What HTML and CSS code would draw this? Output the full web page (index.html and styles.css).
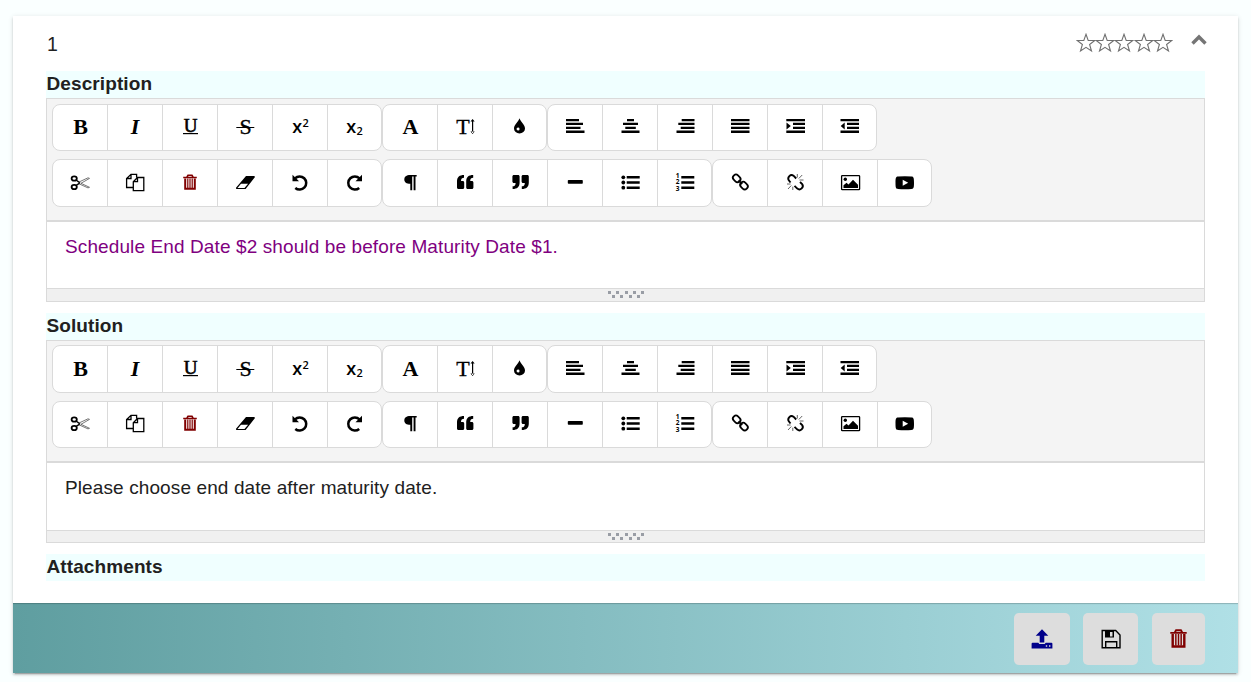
FILE: index.html
```html
<!DOCTYPE html>
<html lang="en">
<head>
<meta charset="utf-8">
<title>Message 1</title>
<link rel="stylesheet" href="styles.css">
</head>
<body>
<svg class="sprite" aria-hidden="true">
  <symbol id="bold" viewBox="0 0 24 24"><text class="serif heavy" x="12.500" y="19">B</text></symbol>
  <symbol id="italic" viewBox="0 0 24 24"><text class="serif heavy slant" x="12" y="19">I</text></symbol>
  <symbol id="underline" viewBox="0 0 24 24"><text class="serif mid" x="12.500" y="16.500">U</text><path d="M5 18h15v1.200H5z"/></symbol>
  <symbol id="strike" viewBox="0 0 24 24"><text class="serif firm" x="12.500" y="19">S</text><path d="M3.300 12h18v1h-18z"/></symbol>
  <symbol id="sup" viewBox="0 0 24 24"><text class="sans" x="9.300" y="18">x</text><text class="sans tiny" x="17.700" y="12">2</text></symbol>
  <symbol id="sub" viewBox="0 0 24 24"><text class="sans" x="8.300" y="18">x</text><text class="sans tiny" x="16.700" y="20">2</text></symbol>
  <symbol id="font" viewBox="0 0 24 24"><text class="serif heavy" x="12.500" y="19">A</text></symbol>
  <symbol id="size" viewBox="0 0 24 24"><text class="serif firm" x="10" y="19">T</text><path d="M19 5h1.200v13H19zM17.500 6.500l2.100-2.500 2.100 2.500zM17.500 16.500l2.100 2.500 2.100-2.500z"/></symbol>
  <symbol id="drop" viewBox="0 0 24 24"><path fill-rule="evenodd" d="M11.500 3.300C12.500 7 17 9.500 17 13.500a5.500 5 0 0 1-11 0C6 9.500 10.500 7 11.500 3.300zM10 12.500a1.500 1.500 0 1 0 .1 3 1.500 1.500 0 0 0-.1-3z"/></symbol>
  <symbol id="left" viewBox="0 0 24 24"><path d="M3 3.900h13v2.300H3zM3 7.700h17V10H3zM3 11.700h14.500V14H3zM3 15.500h18.500V18H3z"/></symbol>
  <symbol id="center" viewBox="0 0 24 24"><path d="M9 3.900h7v2.300H9zM5 7.700h15V10H5zM7.300 11.700h10.500V14H7.300zM3.500 15.500h18V18h-18z"/></symbol>
  <symbol id="right" viewBox="0 0 24 24"><path d="M8.700 3.900h12.800v2.300H8.700zM5.300 7.700h16.200V10H5.300zM7.700 11.700h13.800V14H7.700zM3.500 15.500h18V18h-18z"/></symbol>
  <symbol id="justify" viewBox="0 0 24 24"><path d="M3 3.900h18.500v2.300H3zM3 7.700h18.500V10H3zM3 11.700h18.500V14H3zM3 15.500h18.500V18H3z"/></symbol>
  <symbol id="indent" viewBox="0 0 24 24"><path d="M3.300 3.900H22v2.300H3.300zM10 7.700h12V10H10zM10 11.700h12V14H10zM3.300 15.500H22V18H3.300zM3.500 7.500L7.800 11l-4.300 3.500z"/></symbol>
  <symbol id="outdent" viewBox="0 0 24 24"><path d="M2.500 3.900H21v2.300H2.500zM9 7.700h12V10H9zM9 11.700h12V14H9zM2.500 15.500H21V18H2.500zM6.700 7.500L2.700 11l4 3.500z"/></symbol>
  <symbol id="cut" viewBox="0 0 24 24"><g fill="none" stroke="#000"><ellipse cx="6.200" cy="7.500" rx="2.600" ry="2.200" stroke-width="1.800"/><ellipse cx="6.200" cy="16" rx="2.600" ry="2.200" stroke-width="1.800"/><path stroke-width="1.500" d="M8 9l4 2.800M8 14.500l4-2.700"/><path stroke="#555" stroke-width=".8" d="M11 11l9-4.200 1.500.6L13 12.300l8.500 4-1.500.6-9-4.100"/></g></symbol>
  <symbol id="copy" viewBox="0 0 24 24"><path fill="none" stroke="#000" stroke-width="1.300" d="M10 16.500H3.600V7.500L8 3.300h5.600v3.200M3.600 7.500H8V3.300M10.300 19.700V10.700l4.200-4.200h6.300v13.200zM10.300 10.700h4.200V6.500"/></symbol>
  <symbol id="trash" viewBox="0 0 24 24"><g fill="none" stroke="#800000"><path stroke-width="1.600" d="M5.200 6.500h13.600M9 6l1-1.700h4L15 6"/><path stroke-width="2" d="M7.200 7.500v10.300h9.600V7.500"/><path stroke-width="1.200" d="M9.800 7.500V17M12 7.500V17M14.200 7.500V17"/></g></symbol>
  <symbol id="eraser" viewBox="0 0 24 24"><path fill-rule="evenodd" d="M13 5h8.300l.7 1-9.400 12H3.200L3 16.800zM8 12.700L4.500 17h7l3.600-4.300z"/></symbol>
  <symbol id="undo" viewBox="0 0 24 24"><path fill="none" stroke="#000" stroke-width="2.500" d="M7 7.300a6.600 6.600 0 1 1 .3 9.700"/><path d="M4.500 3.700v6.600h6.500z"/></symbol>
  <symbol id="redo" viewBox="0 0 24 24"><path fill="none" stroke="#000" stroke-width="2.500" d="M16.500 7.300a6.600 6.600 0 1 0-.3 9.700"/><path d="M19 3.700v6.600h-6.500z"/></symbol>
  <symbol id="para" viewBox="0 0 24 24"><path d="M18.700 4v1.500h-1.200V19.300h-1.900V5.500H14.200V19.300h-1.900v-6.500c-4 0-6-1.800-6-4.400S8.300 4 12.300 4z"/></symbol>
  <symbol id="quote-open" viewBox="0 0 24 24"><path d="M11 4v2.700c-2 0-3 .8-3 3.300h1.700c.9 0 1.500.6 1.500 1.500v5c0 .9-.6 1.500-1.500 1.500H5.500C4.600 18 4 17.400 4 16.500V10.500C4 6 6.500 4 11 4z"/><path d="M20.200 4v2.700c-2 0-3 .8-3 3.300h1.700c.9 0 1.500.6 1.500 1.500v5c0 .9-.6 1.500-1.500 1.500h-4.200c-.9 0-1.500-.6-1.500-1.500V10.500c0-4.500 2.500-6.500 7-6.500z"/></symbol>
  <symbol id="quote-close" viewBox="0 0 24 24"><g transform="rotate(180 12.400 11)"><path d="M11 4v2.700c-2 0-3 .8-3 3.300h1.700c.9 0 1.500.6 1.500 1.500v5c0 .9-.6 1.500-1.500 1.500H5.500C4.600 18 4 17.400 4 16.500V10.500C4 6 6.500 4 11 4z"/><path d="M20.200 4v2.700c-2 0-3 .8-3 3.300h1.700c.9 0 1.500.6 1.500 1.500v5c0 .9-.6 1.500-1.500 1.500h-4.200c-.9 0-1.500-.6-1.500-1.500V10.500c0-4.500 2.500-6.500 7-6.500z"/></g></symbol>
  <symbol id="rule" viewBox="0 0 24 24"><rect x="4.800" y="9" width="15" height="3.700" rx=".8"/></symbol>
  <symbol id="bullets" viewBox="0 0 24 24"><circle cx="5.300" cy="6.300" r="1.900"/><circle cx="5.300" cy="11.500" r="1.900"/><circle cx="5.300" cy="16.700" r="1.900"/><path d="M8.700 5H21.700v2.500H8.700zM8.700 10.200H21.700v2.600H8.700zM8.700 15.500H21.700v2.500H8.700z"/></symbol>
  <symbol id="numbers" viewBox="0 0 24 24"><text class="digit" x="4.700" y="7">1</text><text class="digit" x="4.700" y="13.200">2</text><text class="digit" x="4.700" y="19.500">3</text><path d="M8.300 5h13v2.500h-13zM8.300 10.200h13v2.600h-13zM8.300 15.500h13v2.500h-13z"/></symbol>
  <symbol id="link" viewBox="0 0 24 24"><g fill="none" stroke="#000" stroke-width="1.800"><rect x="-4" y="-3" width="8" height="6" rx="2.800" transform="translate(8.700 7.300) rotate(45)"/><rect x="-4" y="-3" width="8" height="6" rx="2.800" transform="translate(16 14.600) rotate(45)"/><path d="M10.500 9.300l3.700 3.700"/></g></symbol>
  <symbol id="unlink" viewBox="0 0 24 24"><path fill="none" stroke="#000" stroke-width="1.900" d="M7.500 11.500L5.800 9.300C4 6.500 7.500 2.500 10.500 4.700l2.700 2.800M11.500 14.800l2.800 2.800c3 2.400 7-1.600 4.900-4.500L17 11"/><path fill="none" stroke="#555" stroke-width=".9" d="M14.300 6.500V3M15.800 7.500l3.400-3.500M16.500 9h4M9.800 15.700V19M8.300 14.500L5 18M7.600 13H4"/></symbol>
  <symbol id="image" viewBox="0 0 24 24"><rect x="3.600" y="4.600" width="18" height="14" rx=".7" fill="none" stroke="#000" stroke-width="1.300"/><circle cx="7.300" cy="8.200" r="1.700"/><path d="M5.500 17v-2.700l3-2.600 2 1.700 4.500-4.600 5 5V17z"/></symbol>
  <symbol id="video" viewBox="0 0 24 24"><path fill-rule="evenodd" d="M5 5.500q7-.5 13.500 0c2 .2 2.500 1 2.500 6.200s-.5 6-2.500 6.200q-6.500.5-13.500 0c-2-.2-2.500-1-2.500-6.200S3 5.700 5 5.500zM9.700 8.700v6l5.500-3z"/></symbol>
  <symbol id="star" viewBox="0 0 20 20"><path fill="none" stroke="#707070" stroke-width="1.100" d="M10 1.300l2.200 6.200h6.600l-5.200 4 1.900 6.500L10 14.300 4.500 18l1.900-6.500-5.200-4h6.600z"/></symbol>
  <symbol id="upload" viewBox="0 0 24 24"><path fill="#00008b" fill-rule="evenodd" d="M12 2.300l6.300 6.400H14.300v6.800H9.700V8.700H5.700zM1.600 16.700q0-1 1-1h5.700l1 1.300h5.400l1-1.300h5.700q1 0 1 1V21.500H1.600zM15.800 18.300v1.400h1.400v-1.400zM19 18.300v1.400h1.400v-1.400z"/></symbol>
  <symbol id="save" viewBox="0 0 24 24"><path fill="none" stroke="#000" stroke-width="1.400" d="M3.200 3.500h13.500l4.300 4.500v12.700H3.200zM6.700 20.500v-5.700h11v5.700"/><path fill-rule="evenodd" d="M6 4h9v6.500H6zM11 5v4.500h2.500V5z"/></symbol>
</svg>

<main class="card">
  <header class="card-head">
    <span class="number">1</span>
    <span class="rating"><svg><use href="#star"/></svg><svg><use href="#star"/></svg><svg><use href="#star"/></svg><svg><use href="#star"/></svg><svg><use href="#star"/></svg></span>
    <svg class="chevron" viewBox="0 0 16 12"><path d="M1.500 9.500L8 3l6.500 6.500"/></svg>
  </header>

  <section class="field">
    <h2>Description</h2>
    <div class="editor">
      <div class="toolbar">
        <div class="row">
          <div class="group"><button><svg><use href="#bold"/></svg></button><button><svg><use href="#italic"/></svg></button><button><svg><use href="#underline"/></svg></button><button><svg><use href="#strike"/></svg></button><button><svg><use href="#sup"/></svg></button><button><svg><use href="#sub"/></svg></button></div>
          <div class="group"><button><svg><use href="#font"/></svg></button><button><svg><use href="#size"/></svg></button><button><svg><use href="#drop"/></svg></button></div>
          <div class="group"><button><svg><use href="#left"/></svg></button><button><svg><use href="#center"/></svg></button><button><svg><use href="#right"/></svg></button><button><svg><use href="#justify"/></svg></button><button><svg><use href="#indent"/></svg></button><button><svg><use href="#outdent"/></svg></button></div>
        </div>
        <div class="row second">
          <div class="group"><button><svg><use href="#cut"/></svg></button><button><svg><use href="#copy"/></svg></button><button><svg><use href="#trash"/></svg></button><button><svg><use href="#eraser"/></svg></button><button><svg><use href="#undo"/></svg></button><button><svg><use href="#redo"/></svg></button></div>
          <div class="group"><button><svg><use href="#para"/></svg></button><button><svg><use href="#quote-open"/></svg></button><button><svg><use href="#quote-close"/></svg></button><button><svg><use href="#rule"/></svg></button><button><svg><use href="#bullets"/></svg></button><button><svg><use href="#numbers"/></svg></button></div>
          <div class="group"><button><svg><use href="#link"/></svg></button><button><svg><use href="#unlink"/></svg></button><button><svg><use href="#image"/></svg></button><button><svg><use href="#video"/></svg></button></div>
        </div>
      </div>
      <p class="content purple">Schedule End Date $2 should be before Maturity Date $1.</p>
      <div class="grip"><svg viewBox="0 0 36 8"><path d="M0 0h3v3H0zM8 0h3v3H8zM17 0h3v3h-3zM25 0h3v3h-3zM33 0h3v3h-3zM4 4h3v3H4zM12 4h3v3h-3zM21 4h3v3h-3zM29 4h3v3h-3z"/></svg></div>
    </div>
  </section>

  <section class="field compact">
    <h2>Solution</h2>
    <div class="editor">
      <div class="toolbar">
        <div class="row">
          <div class="group"><button><svg><use href="#bold"/></svg></button><button><svg><use href="#italic"/></svg></button><button><svg><use href="#underline"/></svg></button><button><svg><use href="#strike"/></svg></button><button><svg><use href="#sup"/></svg></button><button><svg><use href="#sub"/></svg></button></div>
          <div class="group"><button><svg><use href="#font"/></svg></button><button><svg><use href="#size"/></svg></button><button><svg><use href="#drop"/></svg></button></div>
          <div class="group"><button><svg><use href="#left"/></svg></button><button><svg><use href="#center"/></svg></button><button><svg><use href="#right"/></svg></button><button><svg><use href="#justify"/></svg></button><button><svg><use href="#indent"/></svg></button><button><svg><use href="#outdent"/></svg></button></div>
        </div>
        <div class="row second">
          <div class="group"><button><svg><use href="#cut"/></svg></button><button><svg><use href="#copy"/></svg></button><button><svg><use href="#trash"/></svg></button><button><svg><use href="#eraser"/></svg></button><button><svg><use href="#undo"/></svg></button><button><svg><use href="#redo"/></svg></button></div>
          <div class="group"><button><svg><use href="#para"/></svg></button><button><svg><use href="#quote-open"/></svg></button><button><svg><use href="#quote-close"/></svg></button><button><svg><use href="#rule"/></svg></button><button><svg><use href="#bullets"/></svg></button><button><svg><use href="#numbers"/></svg></button></div>
          <div class="group"><button><svg><use href="#link"/></svg></button><button><svg><use href="#unlink"/></svg></button><button><svg><use href="#image"/></svg></button><button><svg><use href="#video"/></svg></button></div>
        </div>
      </div>
      <p class="content">Please choose end date after maturity date.</p>
      <div class="grip"><svg viewBox="0 0 36 8"><path d="M0 0h3v3H0zM8 0h3v3H8zM17 0h3v3h-3zM25 0h3v3h-3zM33 0h3v3h-3zM4 4h3v3H4zM12 4h3v3h-3zM21 4h3v3h-3zM29 4h3v3h-3z"/></svg></div>
    </div>
  </section>

  <section class="field"><h2>Attachments</h2></section>

  <footer class="actions">
    <button class="upload"><svg><use href="#upload"/></svg></button>
    <button class="save"><svg><use href="#save"/></svg></button>
    <button class="delete"><svg><use href="#trash"/></svg></button>
  </footer>
</main>
</body>
</html>
```
FILE: styles.css
```css
* { box-sizing: border-box; }
body {
  margin: 0;
  height: 682px;
  padding: 16px 13px 0;
  overflow: hidden;
  background: #faffff;
  color: #212121;
  font-family: "Liberation Sans", Arial, sans-serif;
}
.sprite { display: none; }
.sprite text { text-anchor: middle; }
.serif { font: 22px "Liberation Serif", serif; }
.heavy { font-weight: bold; }
.slant { font-style: italic; }
.firm { stroke: #000; stroke-width: .35px; }
.mid { font-size: 19px; stroke: #000; stroke-width: .6px; }
.sans { font: 600 18px "Open Sans", sans-serif; }
.tiny { font-size: 11px; }
.digit { font: bold 6.5px "Open Sans", sans-serif; }

.card {
  display: flex;
  flex-direction: column;
  width: 1225px;
  height: 657px;
  background: #fff;
  box-shadow: 0 3px 1px -2px rgba(0,0,0,.2), 0 2px 2px rgba(0,0,0,.14), 0 1px 5px rgba(0,0,0,.12);
}
.card-head {
  display: flex;
  align-items: center;
  height: 55px;
  padding: 0 31px 0 34px;
}
.number { flex: 1; padding-top: 2px; font-size: 19.5px; }
.rating { display: flex; margin: 0 19px 2px 0; }
.rating svg { width: 20px; height: 20px; margin-right: -.8px; }
.chevron { width: 16px; height: 12px; margin-bottom: 8px; }
.chevron path { fill: none; stroke: #757575; stroke-width: 3.4; }

.field { margin: 0 33px 11px; }
.field h2 {
  height: 27px;
  margin: 0;
  padding-left: .5px;
  background: #f0ffff;
  font-size: 19px;
  line-height: 26px;
  letter-spacing: .1px;
}
.editor { border: 1px solid #dadada; }
.toolbar {
  height: 123px;
  padding: 5px;
  background: #f4f4f4;
  border-bottom: 2px solid #dadada;
}
.row { display: flex; height: 47px; margin-bottom: 8px; }
.row.second { height: 48px; }
.group {
  display: flex;
  background: #fff;
  border: 1px solid #dadada;
  border-radius: 8px;
}
.group button {
  display: flex;
  width: 55px;
  padding: 10px 0 0 15px;
  border: 0;
  border-left: 1px solid #dadada;
  background: none;
}
.group button:first-child { width: 54px; border-left: 0; }
.group button:last-child { width: 54px; }
.second .group button { padding-top: 11px; }
.group svg { flex: none; width: 24px; height: 24px; }
.content {
  height: 66px;
  margin: 0;
  padding: 14px 18px;
  font-size: 19px;
  line-height: 22px;
  letter-spacing: .11px;
}
.purple { color: #800080; }
.grip {
  display: flex;
  justify-content: center;
  height: 13px;
  padding-top: 2px;
  border-top: 1px solid #dadada;
  background: #f0f0f0;
}
.grip svg { width: 36px; height: 8px; fill: #999da5; }

.compact .toolbar { height: 122px; padding-top: 4px; }
.compact .row { height: 48px; }
.compact .row.second { height: 47px; }
.compact .group button { padding-top: 11px; }
.compact .second .group button { padding-top: 10px; }
.compact .content { height: 67px; }
.compact .grip { height: 12px; }

.actions {
  display: flex;
  align-items: flex-start;
  justify-content: flex-end;
  height: 70px;
  margin-top: auto;
  padding: 10px 33px 0;
  background: linear-gradient(to right, #5f9ea0, #b0e0e6);
  box-shadow: inset 0 2px 1px -1px rgba(0,0,0,.2);
}
.actions button {
  display: flex;
  align-items: center;
  justify-content: center;
  height: 52px;
  margin-left: 13px;
  padding: 0;
  border: 0;
  border-radius: 5px;
  background: #ddd;
}
.actions svg { width: 24px; height: 24px; }
.actions .upload { width: 56px; }
.actions .save { width: 55px; }
.actions .delete { width: 53px; margin-left: 14px; }
.actions .delete svg { width: 29px; height: 29px; }
```
